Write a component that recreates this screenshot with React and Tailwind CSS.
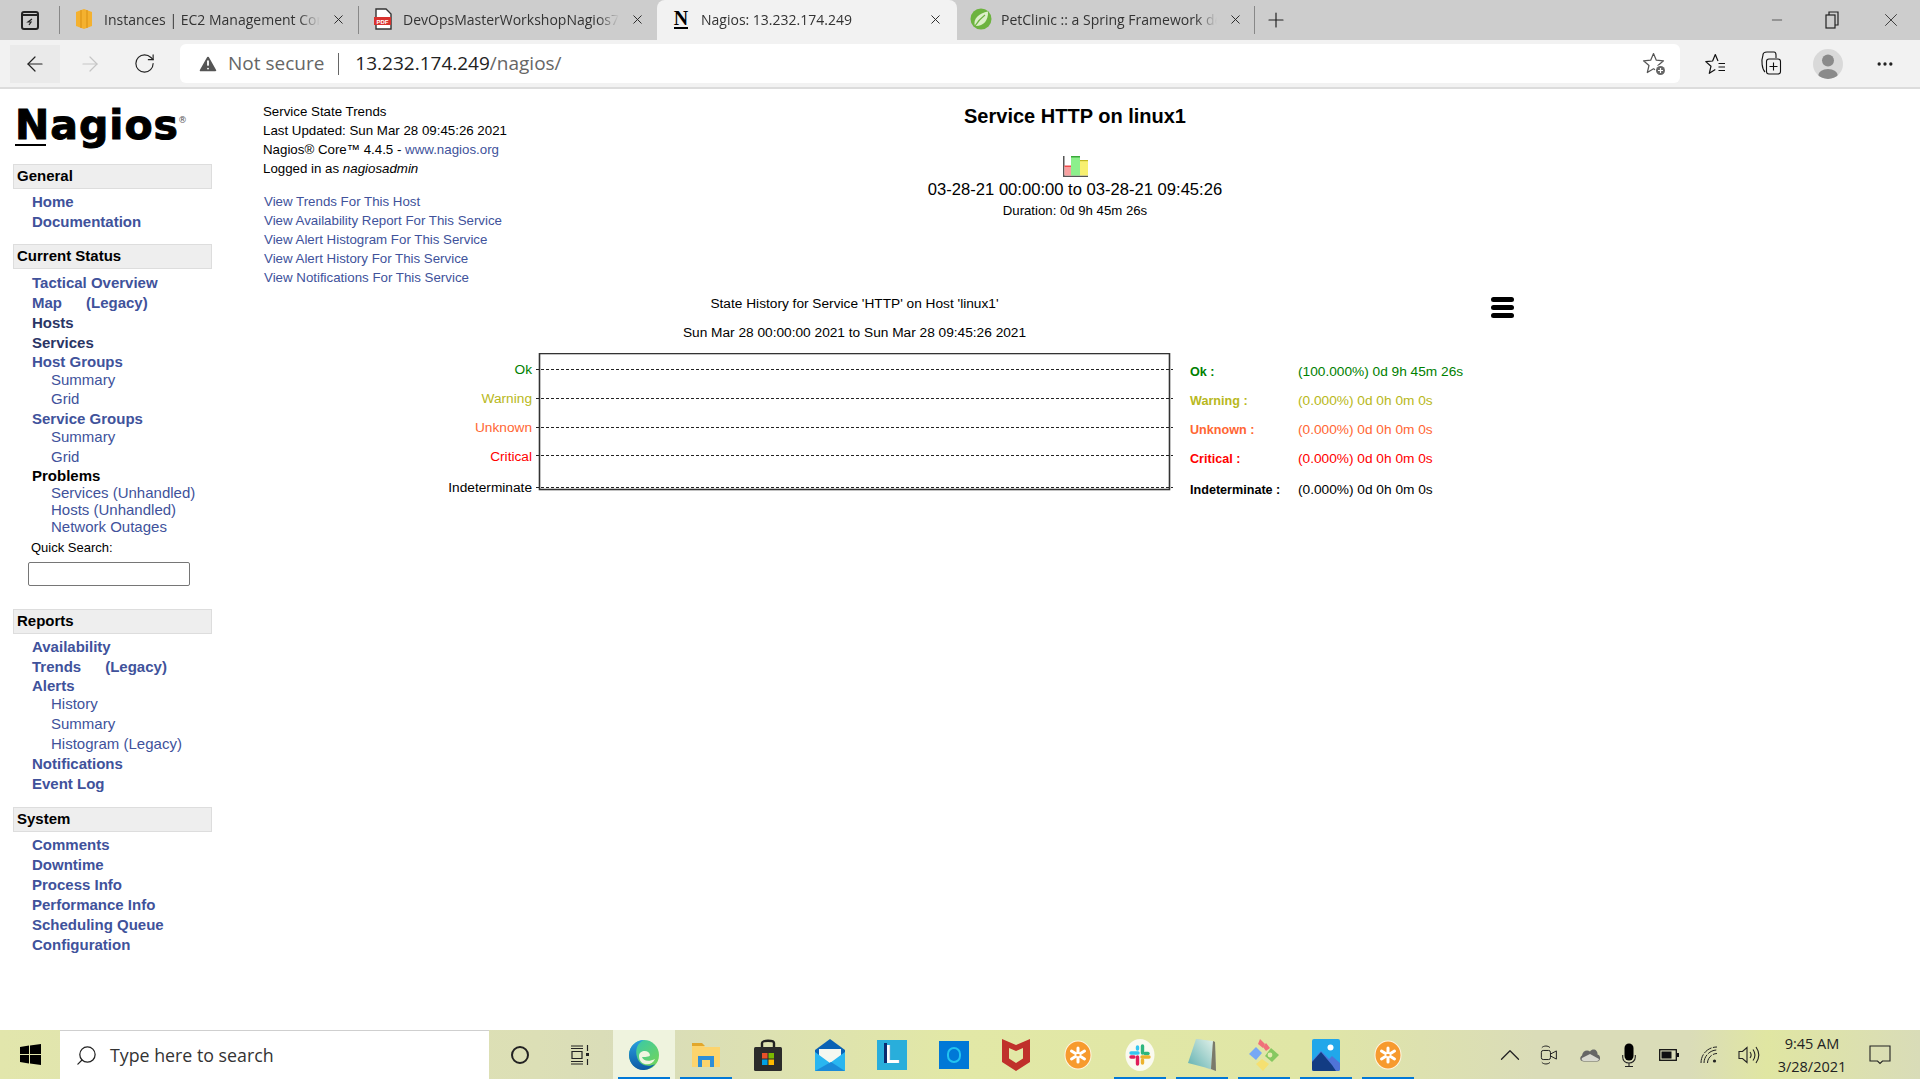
import React from 'react';
import { ArrowLeft, ArrowRight, RotateCw, X, Plus, Minus, Search, ChevronUp, MoreHorizontal, TriangleAlert } from 'lucide-react';

const LINK = 'text-[#40529b]';

// Browser tabs
const Tab = ({ icon, label, active, w }) => (
  <div className={`relative flex items-center h-full ${w} pl-[15px] pb-[2px] ${active ? 'bg-[#f2f2f2] rounded-t-[8px]' : ''}`}>
    <div className="w-[18px] h-[22px] flex items-center justify-center shrink-0">{icon}</div>
    <div className="ml-[11px] w-[216px] overflow-hidden whitespace-nowrap text-[14px] text-[#333] font-['Open_Sans'] [mask-image:linear-gradient(90deg,#000_90%,transparent)]">{label}</div>
    <X size={15} strokeWidth={1.5} className="ml-[11px] text-[#222] shrink-0" />
  </div>
);

const Sep = () => <div className="w-px h-[28px] bg-[#888] shrink-0" />;

const Ec2Icon = () => (
  <svg width="18" height="22" viewBox="0 0 18 22">
    <path d="M9 1 L17 4 V18 L9 21 L1 18 V4 Z" fill="#f4b12f" />
    <path d="M6 2 V20 M12 2 V20" stroke="#d88f12" strokeWidth="1" />
  </svg>
);
const PdfIcon = () => (
  <svg width="18" height="22" viewBox="0 0 18 22">
    <path d="M2 1 H12 L17 6 V21 H2 Z" fill="#fff" stroke="#333" strokeWidth="1.4" />
    <rect x="0" y="9" width="17" height="8" fill="#d9322e" />
    <text x="8.5" y="15.5" fontSize="6" fontWeight="700" fill="#fff" textAnchor="middle" fontFamily="Liberation Sans">PDF</text>
  </svg>
);
const LeafIcon = () => (
  <svg width="22" height="22" viewBox="0 0 22 22" className="shrink-0">
    <circle cx="11" cy="11" r="10.5" fill="#6db33f" />
    <path d="M18 3.5 C18.5 13 13 18.5 5 18 C2.5 11 9 5 18 3.5 Z" fill="#dcefc9" />
    <path d="M5 18 C8 13 11 10 15 7" stroke="#6db33f" strokeWidth="1.2" fill="none" />
  </svg>
);

// Toolbar icons
const StarPlus = () => (
  <svg width="26" height="26" viewBox="0 0 26 26" fill="none">
    <path d="M11.5 2.5 L14.3 9.2 L21.5 9.8 L16 14.5 L17.7 21.5 L11.5 17.8 L5.3 21.5 L7 14.5 L1.5 9.8 L8.7 9.2 Z" stroke="#555" strokeWidth="1.2" strokeLinejoin="round" />
    <circle cx="18.5" cy="19.5" r="5.5" fill="#fff" />
    <circle cx="18.5" cy="19.5" r="4.5" fill="#666" />
    <path d="M18.5 17 V22 M16 19.5 H21" stroke="#fff" strokeWidth="1.2" />
  </svg>
);
const FavList = () => (
  <svg width="24" height="24" viewBox="0 0 24 24" fill="none" stroke="#111" strokeWidth="1.2" strokeLinejoin="round">
    <path d="M14 9 L11.3 2.5 L8.6 9 L1.8 9.6 L7 14.2 L5.3 21.3 L11.3 17.6" />
    <path d="M14.5 11.5 H21 M14.5 15 H21 M14.5 18.5 H21" />
  </svg>
);
const Collections = () => (
  <svg width="24" height="26" viewBox="0 0 24 26" fill="none" stroke="#111" strokeWidth="1.1">
    <path d="M6 21 C3 18 2 10 4 4 C4 2 6 1 8 1 H15 C16 1 17 2 17 4 V7" />
    <rect x="7.5" y="8" width="14" height="15" rx="2.5" />
    <path d="M14.5 11.5 V19.5 M10.5 15.5 H18.5" />
  </svg>
);
const Avatar = () => (
  <div className="w-[30px] h-[30px] rounded-full bg-[#d9d9d9] overflow-hidden flex items-center justify-center">
    <svg width="30" height="30" viewBox="0 0 30 30">
      <circle cx="15" cy="11.5" r="6" fill="#8a8a8a" />
      <ellipse cx="15" cy="27" rx="10" ry="7" fill="#8a8a8a" />
    </svg>
  </div>
);

// Taskbar icons
const WinLogo = () => (
  <svg width="21" height="21" viewBox="0 0 21 21" fill="#000">
    <path d="M0 3 L9 1.6 V10 H0 Z M10 1.4 L21 0 V10 H10 Z M0 11 H9 V19.4 L0 18 Z M10 11 H21 V21 L10 19.6 Z" />
  </svg>
);
const TaskView = () => (
  <svg width="20" height="22" viewBox="0 0 20 22" fill="none" stroke="#222" strokeWidth="1.2">
    <path d="M1 2 H13 M1 4.5 H13 M2 7.5 H12 V14.5 H2 Z M1 17.5 H13 M1 20 H13 M17.5 1 V7 M17.5 15 V21" />
    <rect x="16" y="9" width="3" height="3" fill="#222" stroke="none" />
  </svg>
);
const EdgeIcon = () => (
  <svg width="32" height="32" viewBox="0 0 32 32">
    <defs>
      <linearGradient id="edgeA" x1="0" y1="0" x2="1" y2="1">
        <stop offset="0" stopColor="#30c7b5" />
        <stop offset="1" stopColor="#7ad650" />
      </linearGradient>
      <linearGradient id="edgeB" x1="0" y1="0" x2="0" y2="1">
        <stop offset="0" stopColor="#2a9fe0" />
        <stop offset="1" stopColor="#0c59a4" />
      </linearGradient>
    </defs>
    <circle cx="16" cy="16" r="15" fill="url(#edgeA)" />
    <path d="M1 16 C1 6 10 1 16 1 C9 4 7 11 9 18 C11 26 20 29 27 25 C23 30 18 31 15 31 C7 31 1 24 1 16 Z" fill="url(#edgeB)" />
    <path d="M11 17 C11 11 21 10 22 16 C22 18 16 18 14 18 C15 22 21 23 27 20 C24 28 11 27 11 17 Z" fill="#f0f5e0" />
  </svg>
);
const FolderIcon = () => (
  <svg width="30" height="28" viewBox="0 0 30 28">
    <path d="M1 3 H11 L14 6 H29 V26 H1 Z" fill="#fcd46d" />
    <path d="M1 2 H11 L14 5 H1 Z" fill="#e2a72c" />
    <rect x="7" y="15" width="16" height="11" fill="#2e8ed8" />
    <rect x="11" y="19" width="8" height="7" fill="#fcd46d" />
  </svg>
);
const StoreIcon = () => (
  <svg width="30" height="32" viewBox="0 0 30 32">
    <path d="M9 9 V4 C9 1 21 1 21 4 V9" fill="none" stroke="#222" strokeWidth="2.4" />
    <rect x="1" y="8" width="28" height="24" rx="1.5" fill="#2b2b2b" />
    <rect x="9" y="14" width="5.5" height="5.5" fill="#e8502a" />
    <rect x="15.5" y="14" width="5.5" height="5.5" fill="#7ab800" />
    <rect x="9" y="20.5" width="5.5" height="5.5" fill="#00a1e4" />
    <rect x="15.5" y="20.5" width="5.5" height="5.5" fill="#fdb900" />
  </svg>
);
const MailIcon = () => (
  <svg width="30" height="32" viewBox="0 0 30 32">
    <path d="M0 11 L15 0 L30 11 V32 H0 Z" fill="#0a62b5" />
    <path d="M4 10 H26 V18 L15 25 L4 18 Z" fill="#f5f7f0" />
    <path d="M0 13 L15 24 L30 13 V32 H0 Z" fill="#29b6f0" />
    <path d="M0 32 L16 23 L30 32 Z" fill="#1a8ad8" />
  </svg>
);
const LIcon = () => (
  <div className="w-[30px] h-[30px] bg-[#29aedb] flex items-center justify-center relative">
    <div className="w-[3px] h-[20px] bg-[#0b2a6f] absolute left-[7px] top-[3px]" />
    <span className="text-white font-bold text-[25px] leading-none font-['Liberation_Sans']">L</span>
  </div>
);
const AlexaIcon = () => (
  <div className="w-[30px] h-[28px] bg-[#0078d7] flex items-center justify-center">
    <div className="w-[14px] h-[16px] rounded-full border-2 border-[#22c3f0]" />
  </div>
);
const McAfee = () => (
  <svg width="28" height="32" viewBox="0 0 28 32">
    <path d="M0 0 L14 6 L28 0 V23 L14 32 L0 23 Z" fill="#c0302b" />
    <path d="M7 9 L14 12 L21 9 V19.5 L14 24 L7 19.5 Z" fill="#e2e8a6" />
  </svg>
);
const Blossom = () => (
  <svg width="28" height="30" viewBox="0 0 28 30">
    <ellipse cx="14" cy="15" rx="13.5" ry="14.5" fill="#fff5e0" />
    <ellipse cx="14" cy="15" rx="12.5" ry="13.5" fill="#f79a2e" />
    <g stroke="#fff" strokeWidth="3" strokeLinecap="round">
      <path d="M14 8 V12.5 M14 17.5 V22 M7.5 11 L11.5 13.5 M16.5 16.5 L20.5 19 M7.5 19 L11.5 16.5 M16.5 13.5 L20.5 11" />
    </g>
  </svg>
);
const SlackIcon = () => (
  <svg width="30" height="32" viewBox="0 0 30 32">
    <ellipse cx="15" cy="16" rx="14.5" ry="16" fill="#fafaf0" />
    <g strokeWidth="3.4" strokeLinecap="round">
      <path d="M17.5 7 V14" stroke="#2eb67d" />
      <path d="M20 14.5 H23" stroke="#2eb67d" />
      <path d="M17 18 H24" stroke="#ecb22e" />
      <path d="M17.5 21 V24" stroke="#ecb22e" />
      <path d="M12.5 18 V25" stroke="#e01e5a" />
      <path d="M6 18 H9" stroke="#e01e5a" />
      <path d="M6 14 H13" stroke="#36c5f0" />
      <path d="M12.5 8 V10" stroke="#36c5f0" />
    </g>
  </svg>
);
const NotepadIcon = () => (
  <svg width="30" height="34" viewBox="0 0 30 34">
    <path d="M10 1 L28 4 L29 33 L19 30 Z" fill="#c9cdb8" />
    <path d="M9 1 L26 3 L24 31 L1 25 Z" fill="url(#pad)" />
    <defs>
      <linearGradient id="pad" x1="0" y1="1" x2="1" y2="0">
        <stop offset="0" stopColor="#5fb0b0" />
        <stop offset="1" stopColor="#e0f0e8" />
      </linearGradient>
    </defs>
    <path d="M24 31 L26 3 L28 4 L29 33 Z" fill="#7a7a6a" />
  </svg>
);
const KrakenIcon = () => (
  <svg width="32" height="34" viewBox="0 0 32 34">
    <path d="M12 1 L17 6 L15 10 L10 6 Z" fill="#f0707a" />
    <path d="M18 5 L22 10 L18 13 L15 9 Z" fill="#f0707a" />
    <path d="M8 9 L14 15 L8 22 L1 16 Z" fill="#76a8f5" />
    <path d="M23 10 L31 17 L24 24 L17 18 Z" fill="#86c860" />
    <circle cx="22" cy="17" r="2.4" fill="#e6ebb0" />
    <path d="M14 21 L21 26 L15 33 L8 26 Z" fill="#f5e070" />
  </svg>
);
const PhotosIcon = () => (
  <div className="w-[28px] h-[32px] bg-[#21a7ea] rounded-[2px] overflow-hidden">
    <svg width="28" height="32" viewBox="0 0 28 32">
      <circle cx="18.5" cy="8.5" r="3" fill="#fff" />
      <path d="M0 22 L9 12 L17 20 L20 17 L28 24 V32 H0 Z" fill="#4f74d8" />
      <path d="M0 23 L9 13 L20 26 L24 32 H0 Z" fill="#123c83" />
    </svg>
  </div>
);

// Tray icons
const MeetIcon = () => (
  <svg width="20" height="22" viewBox="0 0 22 24" fill="none" stroke="#222" strokeWidth="1.1">
    <path d="M2 4 C4 1.5 9 1.5 11 4 M2 20 C4 22.5 9 22.5 11 20" />
    <rect x="1.5" y="7" width="10" height="10" rx="2" />
    <path d="M11.5 11 L18 7.5 V16.5 L11.5 13" />
  </svg>
);
const CloudIcon = () => (
  <svg width="22" height="15" viewBox="0 0 22 15">
    <path d="M5 14.5 C1 14.5 0 10.5 3 8.5 C3.5 4 8 2 11 4.5 C14 0.5 19 3 18.5 7.5 C22 8 22 14.5 18 14.5 Z" fill="#666" />
    <path d="M5 14 C3 14 2 12 3 11 L11 7 L20 12 C20 13 19 14 18 14 Z" fill="#d8d8cf" />
  </svg>
);
const MicIcon = () => (
  <svg width="14" height="24" viewBox="0 0 14 24" fill="none">
    <rect x="2.5" y="0.5" width="9" height="17" rx="4.5" fill="#000" />
    <path d="M0.7 12 V14 C0.7 22 13.3 22 13.3 14 V12 M7 20 V23.5 M3 23.5 H11" stroke="#222" strokeWidth="1.1" />
  </svg>
);
const BatteryIcon = () => (
  <svg width="20" height="12" viewBox="0 0 20 12">
    <rect x="0.7" y="0.7" width="16.6" height="10.6" fill="none" stroke="#111" strokeWidth="1.3" />
    <rect x="2.5" y="2.5" width="10" height="7" fill="#111" />
    <rect x="18" y="4" width="2" height="4" fill="#111" />
  </svg>
);
const WifiIcon = () => (
  <svg width="18" height="18" viewBox="0 0 18 18" fill="none" stroke="#222" strokeWidth="1">
    <path d="M1 17 C1 8 8 1 17 1 M4 17 C4 10 10 4 17 4 M7.5 17 C7.5 12 12 7.5 17 7.5" strokeDasharray="9 1.5" />
    <circle cx="14.5" cy="15" r="1.6" fill="#222" stroke="none" />
  </svg>
);
const VolumeIcon = () => (
  <svg width="22" height="20" viewBox="0 0 22 20" fill="none" stroke="#222" strokeWidth="1.1">
    <path d="M1 6.5 H4.5 L9 2.5 V17.5 L4.5 13.5 H1 Z" />
    <path d="M12 7 C13.5 9 13.5 11 12 13 M15 4.5 C17.5 8 17.5 12 15 15.5 M18 2 C21.5 7 21.5 13 18 18" />
  </svg>
);
const ActionCenter = () => (
  <svg width="22" height="20" viewBox="0 0 22 20" fill="none" stroke="#222" strokeWidth="1.1">
    <path d="M1 1 H21 V16 H13.5 L11 18.5 L8.5 16 H1 Z" />
  </svg>
);

const TaskApp = ({ children, mark, bright }) => (
  <div className={`relative w-[62px] h-full flex items-center justify-center shrink-0 ${bright ? 'bg-[#eff3de]' : ''}`}>
    {children}
    {mark && <div className="absolute bottom-0 left-[5px] right-[5px] h-[2px] bg-[#0078d7]" />}
  </div>
);

// Side menu rows
const SideHead = ({ label, mt }) => (
  <div className={`h-[25px] ${mt} bg-[#eeeeee] border border-[#dddddd] pl-[3px] flex items-center font-bold text-[15px] text-black`}>{label}</div>
);

const Row = ({ h, label, sub, dark, black, extra }) => (
  <div className={`${h} flex items-center whitespace-nowrap text-[15px] ${sub ? 'pl-[38px] font-normal' : 'pl-[19px] font-bold'} ${black ? 'text-black' : dark ? 'text-[#2a3566]' : LINK}`}>
    {label}
    {extra}
  </div>
);

const Sidebar = () => (
  <aside className="w-[263px] shrink-0 pl-[13px] pr-[51px] font-['Liberation_Sans']">
    {/* Logo */}
    <div className="h-[75px] pl-[2px] pt-[12px] flex items-start">
      <div className="relative font-['DejaVu_Sans'] font-bold text-[41px] leading-[48px] text-black whitespace-nowrap tracking-[1px] [-webkit-text-stroke:1px_#000]">
        Nagios
        <span className="absolute left-0 top-[43px] w-[31px] h-[2px] bg-black" />
        <span className="absolute left-[163px] top-[-5px] text-[9px] font-normal text-[#555] [-webkit-text-stroke:0]">®</span>
      </div>
    </div>

    <SideHead label="General" mt="" />
    <div className="pt-[3px]">
      <Row h="h-[20px]" label="Home" />
      <Row h="h-[20px]" label="Documentation" />
    </div>

    <SideHead label="Current Status" mt="mt-[12px]" />
    <div className="pt-[4px]">
      <Row h="h-[20px]" label="Tactical Overview" />
      <Row h="h-[20px]" label="Map" extra={<span className="ml-[24px]">(Legacy)</span>} />
      <Row h="h-[20px]" label="Hosts" dark />
      <Row h="h-[20px]" label="Services" dark />
      <Row h="h-[19px]" label="Host Groups" />
      <Row h="h-[17px]" label="Summary" sub />
      <Row h="h-[21px]" label="Grid" sub />
      <Row h="h-[18px]" label="Service Groups" />
      <Row h="h-[19px]" label="Summary" sub />
      <Row h="h-[20px]" label="Grid" sub />
      <Row h="h-[18px]" label="Problems" black />
      <Row h="h-[17px]" label="Services (Unhandled)" sub />
      <Row h="h-[17px]" label="Hosts (Unhandled)" sub />
      <Row h="h-[17px]" label="Network Outages" sub />
    </div>
    <div className="mt-[2px] h-[20px] pl-[18px] flex items-center text-[13px] text-black">Quick Search:</div>
    <input className="block mt-[4px] ml-[15px] w-[162px] h-[24px] border border-[#767676] rounded-[2px] bg-white" />

    <SideHead label="Reports" mt="mt-[23px]" />
    <div className="pt-[3px]">
      <Row h="h-[20px]" label="Availability" />
      <Row h="h-[20px]" label="Trends" extra={<span className="ml-[24px]">(Legacy)</span>} />
      <Row h="h-[18px]" label="Alerts" />
      <Row h="h-[19px]" label="History" sub />
      <Row h="h-[20px]" label="Summary" sub />
      <Row h="h-[20px]" label="Histogram (Legacy)" sub />
      <Row h="h-[20px]" label="Notifications" />
      <Row h="h-[21px]" label="Event Log" />
    </div>

    <SideHead label="System" mt="mt-[12px]" />
    <div className="pt-[3px]">
      <Row h="h-[20px]" label="Comments" />
      <Row h="h-[20px]" label="Downtime" />
      <Row h="h-[20px]" label="Process Info" />
      <Row h="h-[20px]" label="Performance Info" />
      <Row h="h-[20px]" label="Scheduling Queue" />
      <Row h="h-[20px]" label="Configuration" />
    </div>
  </aside>
);

const TREND_LINKS = [
  'View Trends For This Host',
  'View Availability Report For This Service',
  'View Alert Histogram For This Service',
  'View Alert History For This Service',
  'View Notifications For This Service',
];

const TrendIcon = () => (
  <svg width="25" height="21" viewBox="0 0 25 21">
    <rect x="0" y="0" width="1.5" height="21" fill="#555" />
    <rect x="0" y="19.5" width="25" height="1.5" fill="#555" />
    <rect x="1.5" y="10" width="7" height="9.5" fill="#f8a0a0" />
    <rect x="1.5" y="9.5" width="7" height="1.5" fill="#ef4a4a" />
    <rect x="8" y="1" width="9" height="18.5" fill="#8cf08c" />
    <rect x="8" y="0" width="9" height="1.5" fill="#3aa83a" />
    <rect x="17" y="5" width="8" height="14.5" fill="#f8f070" />
    <rect x="17" y="4" width="8" height="1.2" fill="#c0b820" />
  </svg>
);

const CHART_ROWS = [
  { name: 'Ok', value: '(100.000%) 0d 9h 45m 26s', color: 'text-[#008000]', h: 'h-[29px]' },
  { name: 'Warning', value: '(0.000%) 0d 0h 0m 0s', color: 'text-[#b8b820]', h: 'h-[29px]' },
  { name: 'Unknown', value: '(0.000%) 0d 0h 0m 0s', color: 'text-[#ff6633]', h: 'h-[29px]' },
  { name: 'Critical', value: '(0.000%) 0d 0h 0m 0s', color: 'text-[#ff0000]', h: 'h-[29px]' },
  { name: 'Indeterminate', value: '(0.000%) 0d 0h 0m 0s', color: 'text-black', h: 'h-[32px]' },
];

const StateChart = () => (
  <svg width="637" height="139" viewBox="0 0 637 139" className="block shrink-0">
    <rect x="3.5" y="0.5" width="630" height="136" fill="#fff" stroke="#333" strokeWidth="1.6" />
    {[16, 45, 74, 102, 134].map((y) => (
      <line key={y} x1="0" x2="637" y1={y + 0.5} y2={y + 0.5} stroke="#222" strokeWidth="1" strokeDasharray="3 2" />
    ))}
  </svg>
);

const MainContent = () => (
  <main className="flex-1 font-['Liberation_Sans'] text-black">
    {/* Top header */}
    <div className="flex h-[200px]">
      <div className="w-[300px] shrink-0 pt-[13px] text-[13.3px] whitespace-nowrap">
        <div className="h-[19px] flex items-center">Service State Trends</div>
        <div className="h-[19px] flex items-center">Last Updated: Sun Mar 28 09:45:26 2021</div>
        <div className="h-[19px] flex items-center">Nagios® Core™ 4.4.5 -&nbsp;<span className={LINK}>www.nagios.org</span></div>
        <div className="h-[19px] flex items-center">Logged in as&nbsp;<i>nagiosadmin</i></div>
        <div className={`mt-[14px] pl-[1px] ${LINK}`}>
          {TREND_LINKS.map((t) => (
            <div key={t} className="h-[19px] flex items-center">{t}</div>
          ))}
        </div>
      </div>
      <div className="w-[1024px] shrink-0 text-center pt-[15px]">
        <div className="h-[24px] flex items-center justify-center font-bold text-[20px] leading-none">Service HTTP on linux1</div>
        <div className="mt-[28px] h-[21px] flex justify-center"><TrendIcon /></div>
        <div className="h-[24px] mt-[1px] flex items-center justify-center text-[16.6px]">03-28-21 00:00:00 to 03-28-21 09:45:26</div>
        <div className="h-[18px] flex items-center justify-center text-[13.2px]">Duration: 0d 9h 45m 26s</div>
      </div>
    </div>

    {/* Chart titles */}
    <div className="flex h-[64px]">
      <div className="w-[273px] shrink-0" />
      <div className="w-[637px] shrink-0 pt-[1px] text-center text-[13.7px] text-black">
        <div className="h-[29px] flex items-center justify-center">State History for Service 'HTTP' on Host 'linux1'</div>
        <div className="h-[29px] flex items-center justify-center">Sun Mar 28 00:00:00 2021 to Sun Mar 28 09:45:26 2021</div>
      </div>
      <div className="ml-[318px] pt-[8px]">
        <div className="w-[23px] flex flex-col gap-[3.5px]">
          <div className="h-[4.5px] rounded-full bg-black" />
          <div className="h-[4.5px] rounded-full bg-black" />
          <div className="h-[4.5px] rounded-full bg-black" />
        </div>
      </div>
    </div>

    {/* Chart row */}
    <div className="flex">
      <div className="w-[269px] shrink-0 pt-[3px] text-[13.7px] text-right">
        {CHART_ROWS.map((r) => (
          <div key={r.name} className={`${r.h} flex items-center justify-end ${r.color}`}>{r.name}</div>
        ))}
      </div>
      <div className="w-[4px] shrink-0" />
      <StateChart />
      <div className="pl-[17px] pt-[5px] text-[13.7px]">
        {CHART_ROWS.map((r) => (
          <div key={r.name} className={`${r.h} flex items-center ${r.color}`}>
            <span className="w-[108px] font-bold text-[12.6px]">{r.name} :</span>
            <span>{r.value}</span>
          </div>
        ))}
      </div>
    </div>
  </main>
);

const Taskbar = () => (
  <footer className="h-[49px] flex items-stretch shrink-0 bg-[linear-gradient(90deg,#e2e6ac_0%,#dcdfb6_28%,#d9dcb9_33%,#e2e8a6_50%,#e0e6a6_68%,#dadcb8_80%,#dadcb8_88%,#e0e6a2_92%,#d9dcb8_100%)]">
    <div className="w-[60px] flex items-center justify-center"><WinLogo /></div>
    <div className="w-[429px] bg-white border-t border-[#cfcfcf] flex items-center pl-[15px]">
      <Search size={23} strokeWidth={1.3} className="text-[#222] -scale-x-100" />
      <span className="ml-[12px] text-[17.8px] text-[#333] font-['Open_Sans']">Type here to search</span>
    </div>
    <div className="w-[61px] flex items-center justify-center">
      <div className="w-[18px] h-[18px] rounded-full border-[2.5px] border-[#222]" />
    </div>
    <div className="w-[61px] flex items-center justify-center pr-[2px]"><TaskView /></div>
    <div className="ml-[2px] flex items-stretch">
      <TaskApp bright mark><EdgeIcon /></TaskApp>
      <TaskApp mark><FolderIcon /></TaskApp>
      <TaskApp><StoreIcon /></TaskApp>
      <TaskApp><MailIcon /></TaskApp>
      <TaskApp><LIcon /></TaskApp>
      <TaskApp><AlexaIcon /></TaskApp>
      <TaskApp><McAfee /></TaskApp>
      <TaskApp><Blossom /></TaskApp>
      <TaskApp mark><SlackIcon /></TaskApp>
      <TaskApp mark><NotepadIcon /></TaskApp>
      <TaskApp mark><KrakenIcon /></TaskApp>
      <TaskApp mark><PhotosIcon /></TaskApp>
      <TaskApp mark><Blossom /></TaskApp>
    </div>
    <div className="flex-1 flex items-center">
      <div className="ml-[81px] w-[20px] flex justify-center"><ChevronUp size={34} strokeWidth={0.9} className="text-[#222] shrink-0" /></div>
      <div className="ml-[20px] w-[22px]"><MeetIcon /></div>
      <div className="ml-[17px] w-[22px]"><CloudIcon /></div>
      <div className="ml-[17px] w-[22px] flex justify-center"><MicIcon /></div>
      <div className="ml-[19px] w-[20px]"><BatteryIcon /></div>
      <div className="ml-[21px] w-[18px]"><WifiIcon /></div>
      <div className="ml-[20px] w-[22px]"><VolumeIcon /></div>
      <div className="ml-[7px] w-[90px] text-center text-[14.5px] leading-[23px] text-[#222] font-['Open_Sans']">
        <div>9:45 AM</div>
        <div>3/28/2021</div>
      </div>
      <div className="ml-[12px] w-[22px]"><ActionCenter /></div>
    </div>
  </footer>
);

const App = () => (
  <div className="h-[1079px] w-[1920px] flex flex-col overflow-hidden bg-white">
    {/* Tab strip */}
    <div className="h-[40px] shrink-0 bg-[#cdcdcd] flex items-center">
      <div className="w-[59px] flex justify-center pl-[1px]">
        <svg width="18" height="20" viewBox="0 0 18 20" fill="none">
          <rect x="1" y="2" width="16" height="17" rx="2" stroke="#222" strokeWidth="2" />
          <path d="M1 5 H17" stroke="#222" strokeWidth="2" />
          <path d="M11 9 L7 12 H10 L8 15" stroke="#222" strokeWidth="1.2" />
        </svg>
      </div>
      <Sep />
      <Tab w="w-[298px]" icon={<Ec2Icon />} label="Instances | EC2 Management Console" />
      <Sep />
      <Tab w="w-[298px]" icon={<PdfIcon />} label="DevOpsMasterWorkshopNagios7.pdf" />
      <Tab w="w-[300px]" active icon={<span className="font-['Liberation_Serif'] font-bold text-[20px] text-black border-b-2 border-black leading-[18px]">N</span>} label="Nagios: 13.232.174.249" />
      <Tab w="w-[297px]" icon={<LeafIcon />} label="PetClinic :: a Spring Framework demonstration" />
      <Sep />
      <Plus size={24} strokeWidth={1.2} className="ml-[9px] text-[#222]" />
      <div className="flex-1 flex items-center justify-end text-[#333]">
        <Minus size={16} strokeWidth={1.1} className="mr-[40px]" />
        <svg width="14" height="18" viewBox="0 0 14 18" fill="none" stroke="#222" strokeWidth="1.2" className="mr-[41px]">
          <rect x="1" y="4" width="9" height="13" />
          <path d="M4 4 V1 H13 V14 H10" />
        </svg>
        <X size={22} strokeWidth={1} className="mr-[18px]" />
      </div>
    </div>

    {/* Toolbar */}
    <div className="h-[49px] shrink-0 bg-[#f2f2f2] border-b-2 border-[#dcdcdc] flex items-center">
      <div className="ml-[10px] w-[50px] h-[38px] bg-[#eaeaea] flex items-center justify-center">
        <ArrowLeft size={24} strokeWidth={1.2} className="text-[#222]" />
      </div>
      <ArrowRight size={24} strokeWidth={1.2} className="ml-[18px] text-[#c5c5c5]" />
      <RotateCw size={23} strokeWidth={1.2} className="ml-[31px] text-[#222]" />
      <div className="ml-[24px] w-[1500px] h-[39px] bg-white rounded-[6px] flex items-center pl-[17px]">
        <TriangleAlert size={22} strokeWidth={2} className="text-white fill-[#555]" />
        <span className="ml-[9px] text-[19px] text-[#666] font-['Open_Sans']">Not secure</span>
        <div className="ml-[14px] w-px h-[22px] bg-[#666]" />
        <span className="ml-[16px] text-[19px] text-[#222] font-['Open_Sans']">13.232.174.249<span className="text-[#666]">/nagios/</span></span>
        <div className="ml-auto mr-[12px]"><StarPlus /></div>
      </div>
      <div className="ml-[24px]"><FavList /></div>
      <div className="ml-[31px]"><Collections /></div>
      <div className="ml-[30px]"><Avatar /></div>
      <MoreHorizontal size={20} strokeWidth={2} className="ml-[32px] text-[#222]" />
    </div>

    {/* Page */}
    <div className="flex-1 flex min-h-0 bg-white">
      <Sidebar />
      <MainContent />
    </div>

    <Taskbar />
  </div>
);

export default App;
